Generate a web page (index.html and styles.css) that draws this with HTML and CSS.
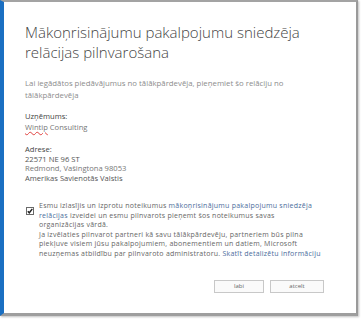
FILE: index.html
```html
<!DOCTYPE html>
<html lang="lv">
<head>
<meta charset="utf-8">
<title>Pilnvarošana</title>
<link rel="stylesheet" href="styles.css">
</head>
<body>
<div class="dialog">
  <h1 class="title">Mākoņrisinājumu pakalpojumu sniedzēja<br>relācijas pilnvarošana</h1>
  <p class="intro">Lai iegādātos piedāvājumus no tālākpārdevēja, pieņemiet šo relāciju no<br>tālākpārdevēja</p>
  <div class="field">
    <div class="label">Uzņēmums:</div>
    <div class="value"><span class="spell">Wintip</span> Consulting</div>
  </div>
  <div class="field field-address">
    <div class="label">Adrese:</div>
    <div class="value dark">22571 NE 96 ST</div>
    <div class="value">Redmond, Vašingtona 98053</div>
    <div class="value dark">Amerikas Savienotās Valstis</div>
  </div>
  <div class="consent">
    <span class="check"><svg width="8" height="8" viewBox="0 0 8 8"><rect x="0.5" y="0.5" width="7" height="7" fill="#fff" stroke="#6a6a6a"/><path d="M1.8 4.2 L3.3 5.8 L6.3 1.9" fill="none" stroke="#222" stroke-width="1.4"/></svg></span>
    <div class="consent-text">Esmu izlasījis un izprotu noteikumus <span class="link">mākoņrisinājumu pakalpojumu sniedzēja<br>relācijas</span> izveidei un esmu pilnvarots pieņemt šos noteikumus savas<br>organizācijas vārdā.<br>Ja izvēlaties pilnvarot partneri kā savu tālākpārdevēju, partneriem būs pilna<br>piekļuve visiem jūsu pakalpojumiem, abonementiem un datiem, Microsoft<br>neuzņemas atbildību par pilnvaroto administratoru. <span class="link">Skatīt detalizētu informāciju</span></div>
  </div>
  <div class="actions">
    <button class="btn">labi</button>
    <button class="btn">atcelt</button>
  </div>
</div>
</body>
</html>
```
FILE: styles.css
```css
html, body {
  margin: 0;
  padding: 0;
  background: #ffffff;
}
body {
  width: 361px;
  height: 319px;
  overflow: hidden;
  font-family: "Open Sans", "Noto Sans", sans-serif;
}
.dialog {
  box-sizing: border-box;
  width: 358px;
  height: 316px;
  background: #fff;
  border-top: 2px solid #a3a3a3;
  border-left: 4px solid #1a6fc2;
  border-right: 2px solid #9a9a9a;
  border-bottom: 3px solid #9e9e9e;
  box-shadow: 1px 1px 2px rgba(0,0,0,0.25);
  padding: 20px 32px 0 21px;
}
.title {
  margin: 0;
  font-weight: 300;
  font-size: 15px;
  line-height: 20px;
  color: #444;
  white-space: nowrap;
}
.intro {
  margin: 15px 0 0;
  font-size: 7.8px;
  line-height: 12px;
  color: #8c8c8c;
  white-space: nowrap;
}
.field {
  margin-top: 11px;
  font-size: 7.6px;
  line-height: 9.4px;
  white-space: nowrap;
}
.field-address {
  margin-top: 13px;
}
.label {
  color: #444;
  margin-bottom: 1.5px;
}
.field-address .label {
  margin-bottom: 0;
}
.value {
  color: #777;
}
.value.dark {
  color: #555;
}
.spell {
  text-decoration: underline wavy #e0413f;
  text-decoration-thickness: 1px;
  text-underline-offset: 1px;
}
.consent {
  margin-top: 18px;
  display: flex;
  gap: 5px;
  align-items: flex-start;
}
.check {
  display: block;
  width: 8px;
  height: 8px;
  margin-top: 6px;
  margin-left: 1px;
}
.check svg {
  display: block;
}
.consent-text {
  font-size: 7px;
  line-height: 9.6px;
  letter-spacing: 0.25px;
  color: #666;
  white-space: nowrap;
}
.link {
  color: #4b6d9c;
}
.actions {
  margin-top: 21px;
  display: flex;
  justify-content: flex-end;
  gap: 6px;
}
.btn {
  width: 50px;
  height: 13px;
  padding: 0;
  border: 1px solid #c8c8c8;
  background: #fafafa;
  font-family: "Open Sans", "Noto Sans", sans-serif;
  font-size: 6px;
  line-height: 11px;
  color: #666;
}
.btn + .btn {
  width: 54px;
}
```
